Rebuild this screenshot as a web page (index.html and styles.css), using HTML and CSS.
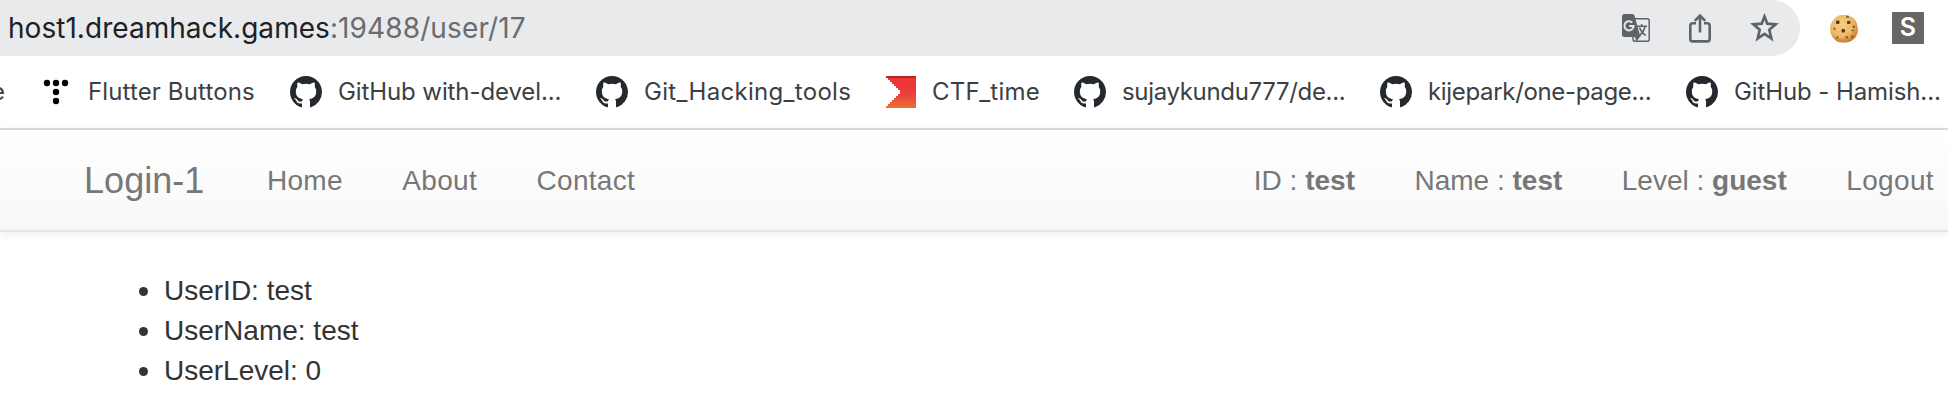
FILE: index.html
```
<!DOCTYPE html>
<html lang="en">
<head>
<meta charset="utf-8">
<title>Login-1</title>
<link rel="stylesheet" href="styles.css">
</head>
<body>
<svg class="defs" aria-hidden="true">
  <symbol id="octocat" viewBox="0 0 16 16">
    <path d="M8 0C3.58 0 0 3.58 0 8c0 3.54 2.29 6.53 5.47 7.59.4.07.55-.17.55-.38 0-.19-.01-.82-.01-1.49-2.01.37-2.53-.49-2.69-.94-.09-.23-.48-.94-.82-1.13-.28-.15-.68-.52-.01-.53.63-.01 1.08.58 1.23.82.72 1.21 1.87.87 2.33.66.07-.52.28-.87.51-1.07-1.78-.2-3.64-.89-3.64-3.95 0-.87.31-1.59.82-2.15-.08-.2-.36-1.02.08-2.12 0 0 .67-.21 2.2.82.64-.18 1.32-.27 2-.27s1.36.09 2 .27c1.53-1.04 2.2-.82 2.2-.82.44 1.1.16 1.92.08 2.12.51.56.82 1.27.82 2.15 0 3.07-1.87 3.75-3.65 3.95.29.25.54.73.54 1.48 0 1.07-.01 1.93-.01 2.2 0 .21.15.46.55.38A8.01 8.01 0 0 0 16 8c0-4.42-3.58-8-8-8z"/>
  </symbol>
</svg>
<header class="toolbar">
  <div class="omnibox">
    <div class="url"><span class="host">host1.dreamhack.games</span><span class="path">:19488/user/17</span></div>
    <div class="actions">
      <svg class="translate" viewBox="0 0 28 28">
        <rect x="11" y="4.700" width="16.200" height="22.500" rx="2" fill="#e9eaec" stroke="#5f6368" stroke-width="1.500"/>
        <path d="M2.500 0H10.500Q12 0 12.400 1.500L18.500 23H2.500A2.500 2.500 0 0 1 0 20.500V2.500A2.500 2.500 0 0 1 2.500 0z" fill="#5f6368"/>
        <path d="M12.500 22H18.500L14.500 27.500z" fill="#5f6368"/>
        <path d="M10.300 8.600A4.600 4.600 0 1 0 11.600 11.900H7.300" fill="none" stroke="#e9eaec" stroke-width="2"/>
        <path d="M14.800 12.200H25M19.700 10V12.200M17.500 13.500C18.800 17 21 19.800 23.700 21.500M23 12.500C22 17 19.500 20 17 21.800" fill="none" stroke="#5f6368" stroke-width="1.600"/>
      </svg>
      <svg class="share" viewBox="0 0 22 29">
        <path d="M7 9.300H3.700A2.400 2.400 0 0 0 1.300 11.700V25A2.400 2.400 0 0 0 3.700 27.400H18.300A2.400 2.400 0 0 0 20.700 25V11.700A2.400 2.400 0 0 0 18.300 9.300H15M11 18.500V2M5.800 6.800L11 1.600L16.200 6.800" fill="none" stroke="#5f6368" stroke-width="2.600"/>
      </svg>
      <svg class="star" viewBox="0 0 29 29">
        <path d="M14.500 3.500L17.300 10.700L25.700 11.300L19.300 16.700L21.300 25.500L14.500 20.800L7.700 25.500L9.700 16.700L3.300 11.300L11.700 10.700z" fill="none" stroke="#5f6368" stroke-width="2.700"/>
      </svg>
    </div>
  </div>
  <svg class="cookie" viewBox="0 0 30 30">
    <defs><radialGradient id="dough" cx=".42" cy=".36" r=".65"><stop offset="0" stop-color="#f6cd82"/><stop offset=".65" stop-color="#eab765"/><stop offset="1" stop-color="#d0742e"/></radialGradient></defs>
    <path d="M10 1.500Q17-.5 22.500 3Q28 6 28.500 13Q30 19 26 24Q21 29 15 28.500Q7 29 3.500 23Q0 18 1.500 11Q4 4 10 1.500z" fill="url(#dough)"/>
    <g fill="#593a25"><rect x="7" y="6.500" width="3.500" height="3.500" rx="1"/><rect x="18" y="7" width="3.500" height="3" rx="1"/><rect x="12.500" y="15" width="3.500" height="3.500" rx="1"/></g>
    <g fill="#8a5a30"><rect x="17" y="1.800" width="3" height="2" rx="1"/><rect x="23.500" y="11.500" width="2.500" height="2.500" rx="1"/><rect x="4.500" y="13.500" width="2" height="2.500" rx="1"/><rect x="22.500" y="15.500" width="2.500" height="2" rx="1"/><rect x="22" y="21.500" width="2.500" height="2.500" rx="1"/><rect x="7" y="22.500" width="2.500" height="2" rx="1"/><rect x="16.500" y="22" width="2.500" height="2.500" rx="1"/></g>
  </svg>
  <div class="profile">S</div>
</header>
<nav class="bookmarks">
  <span class="bm cut">e</span>
  <div class="bm bm-flutter"><svg class="ico" viewBox="0 0 32 32"><g fill="#000"><circle cx="7" cy="7" r="3.200"/><circle cx="16" cy="7" r="3.200"/><circle cx="25" cy="7" r="3.200"/><circle cx="16" cy="16" r="3.200"/><circle cx="16" cy="25" r="3.200"/></g></svg><span>Flutter Buttons</span></div>
  <div class="bm bm-devel"><svg class="ico"><use href="#octocat"/></svg><span>GitHub with-devel...</span></div>
  <div class="bm bm-tools"><svg class="ico"><use href="#octocat"/></svg><span>Git_Hacking_tools</span></div>
  <div class="bm bm-ctf"><svg class="ico" viewBox="0 0 32 32" shape-rendering="crispEdges">
    <defs><linearGradient id="flag" x1="0" y1="0" x2="0" y2="1"><stop offset="0" stop-color="#ef3a28"/><stop offset=".25" stop-color="#ea333a"/><stop offset=".6" stop-color="#e94340"/><stop offset="1" stop-color="#ee7030"/></linearGradient></defs>
    <path d="M2 0H32V32H2V30H4V28H6V26H8V24H10V22H12V20H14V18H16V14H14V12H12V10H10V8H8V6H6V4H4V2H2z" fill="url(#flag)"/><path d="M2 0H32V2H2z" fill="#b5222a"/></svg><span>CTF_time</span></div>
  <div class="bm bm-slim"><svg class="ico"><use href="#octocat"/></svg><span>sujaykundu777/de...</span></div>
  <div class="bm bm-slim"><svg class="ico"><use href="#octocat"/></svg><span>kijepark/one-page...</span></div>
  <div class="bm bm-devel"><svg class="ico"><use href="#octocat"/></svg><span>GitHub - Hamish...</span></div>
</nav>
<nav class="navbar">
  <a class="brand">Login-1</a>
  <a>Home</a>
  <a>About</a>
  <a>Contact</a>
  <div class="account"><a>ID : <b>test</b></a><a>Name : <b>test</b></a><a>Level : <b>guest</b></a><a>Logout</a></div>
</nav>
<main class="content">
  <ul>
    <li>UserID: test</li>
    <li>UserName: test</li>
    <li>UserLevel: 0</li>
  </ul>
</main>
</body>
</html>
```
FILE: styles.css
```
* { box-sizing: border-box; }
body {
  margin: 0;
  height: 400px;
  overflow: hidden;
  background: #fff;
  font-family: "Liberation Sans", Arial, sans-serif;
}
svg { display: block; flex: none; }
.defs { display: none; }

.toolbar { display: flex; height: 56px; font-family: Inter, Roboto, sans-serif; }
.omnibox {
  display: flex;
  width: 1800px;
  height: 56px;
  padding: 0 21px 0 8px;
  border-radius: 0 28px 28px 0;
  background: #e9eaec;
}
.url { font-size: 28px; line-height: 56px; letter-spacing: .04px; white-space: nowrap; }
.host { color: #202124; }
.path { color: #6a6c70; letter-spacing: .12px; }
.actions { display: flex; margin-left: auto; padding-top: 14px; }
.translate { width: 28px; height: 28px; }
.share { width: 22px; height: 29px; margin-left: 39px; }
.star { width: 29px; height: 29px; margin: -1px 0 0 39px; }
.cookie { width: 30px; height: 30px; margin: 14px 0 0 29px; }
.profile {
  width: 32px;
  height: 32px;
  margin: 12px 0 0 33px;
  border-radius: 1px;
  background: #666;
  color: #fff;
  font-size: 25px;
  font-weight: 600;
  line-height: 31px;
  text-align: center;
}

.bookmarks {
  display: flex;
  height: 74px;
  border-bottom: 2px solid #dadcde;
  color: #3c4043;
  font-family: Inter, Roboto, sans-serif;
  font-size: 24px;
  line-height: 72px;
  white-space: nowrap;
}
.bm { display: flex; flex: none; align-items: center; width: 306px; height: 72px; }
.bm.cut { width: 40px; text-indent: -9px; }
.bm-flutter { width: 250px; letter-spacing: .13px; }
.bm-devel { letter-spacing: -.1px; }
.bm-tools { width: 288px; letter-spacing: .3px; }
.bm-ctf { width: 190px; letter-spacing: .25px; }
.bm-slim { letter-spacing: -.33px; }
.ico { width: 32px; height: 32px; margin-right: 16px; fill: #24292f; }

.navbar {
  display: flex;
  position: relative;
  height: 102px;
  padding: 1px 14px 0 84px;
  border-bottom: 2px solid #e4e4e4;
  background: linear-gradient(#fff, #f8f8f8);
  box-shadow: 0 2px 10px rgba(0, 0, 0, .075);
  color: #777;
  font-size: 28px;
  line-height: 100px;
  white-space: nowrap;
}
.navbar a { margin-right: 59.500px; letter-spacing: .3px; }
.navbar .brand { margin-right: 62.500px; font-size: 36px; letter-spacing: .05px; }
.account { display: flex; margin-left: auto; }
.navbar .account a { letter-spacing: 0; }
.navbar .account a:last-child { margin-right: 0; letter-spacing: .35px; }

.content { padding: 39px 0 0 84px; color: #333; font-size: 28px; line-height: 40px; }
.content ul { margin: 0; padding-left: 55px; list-style: none; }
.content li { display: flex; align-items: center; }
.content li::before {
  content: "";
  width: 9px;
  height: 9px;
  margin-right: 16px;
  border-radius: 50%;
  background: #333;
}
```
